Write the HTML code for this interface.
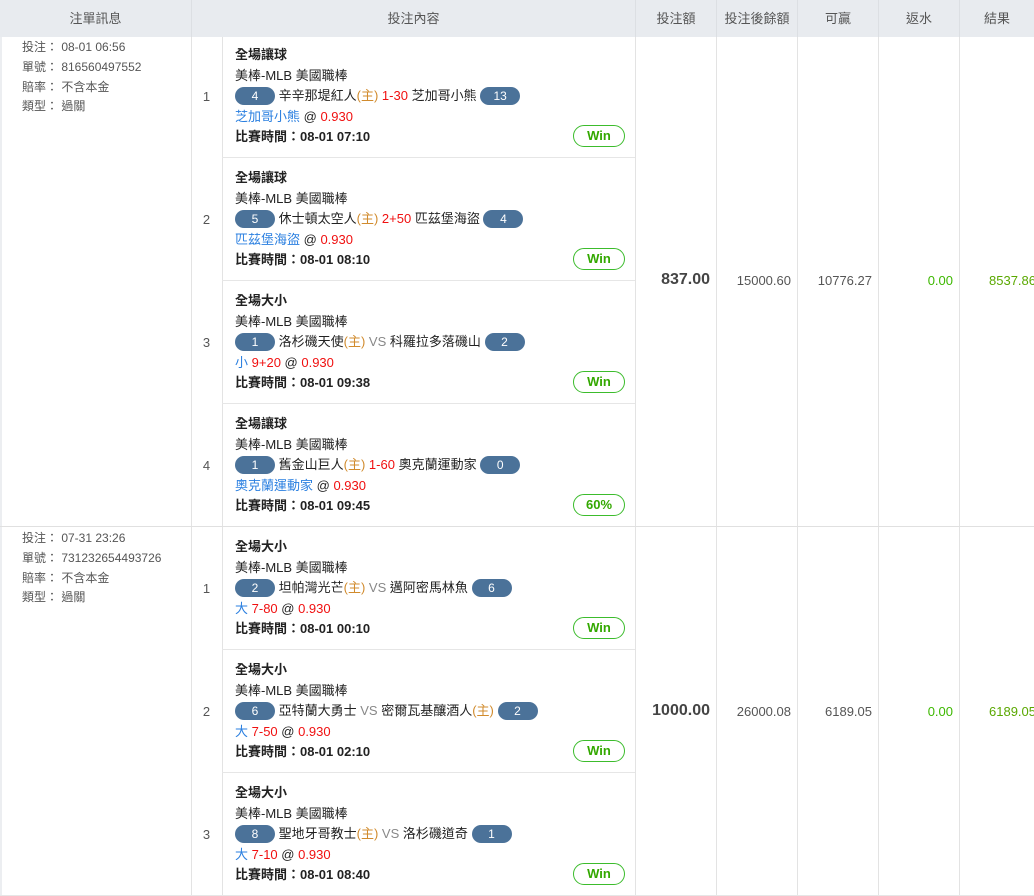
<!DOCTYPE html>
<html><head><meta charset="utf-8"><style>
*{margin:0;padding:0;box-sizing:border-box}
body{width:1034px;height:896px;background:#fff;font-family:"Liberation Sans","Noto Sans CJK TC",sans-serif;font-size:12px;color:#222;position:relative;overflow:hidden}
.a{position:absolute}
.hd{top:0;height:37px;background:#e8ebef;color:#555;font-size:13px;line-height:37px;text-align:center;border-right:1px solid #dcdfe3}
.vl{position:absolute;width:1px;background:#e3e3e3}
.hl{position:absolute;height:1px;background:#e6e6e6}
.info{left:22px;color:#555;font-size:12px;line-height:19.8px}
.no{left:191px;width:31px;text-align:center;color:#555;font-size:13px}
.c{left:235px;font-size:13px;line-height:20.5px;white-space:nowrap}
.c b{font-weight:bold}
.p{display:inline-block;width:40px;height:18px;border-radius:9px;background:#4b7299;color:#fff;text-align:center;line-height:18px;font-size:12px;vertical-align:middle;margin-top:-2px}
.r{color:#f01010}.bl{color:#2a7fe0}.o{color:#d18b2d}.g{color:#888}
.win{left:573px;width:52px;height:22px;border:1.5px solid #3cbc2c;border-radius:11px;color:#33a800;font-weight:bold;font-size:13px;text-align:center;line-height:19px}
.num{text-align:right;font-size:13px;color:#555}
</style></head><body>
<div class="a hd" style="left:0;width:192px">注單訊息</div>
<div class="a hd" style="left:192px;width:444px">投注內容</div>
<div class="a hd" style="left:636px;width:81px">投注額</div>
<div class="a hd" style="left:717px;width:81px">投注後餘額</div>
<div class="a hd" style="left:798px;width:81px">可贏</div>
<div class="a hd" style="left:879px;width:81px">返水</div>
<div class="a hd" style="left:960px;width:74px;border-right:0">結果</div>
<div class="a" style="left:0;top:37px;width:2px;height:859px;background:#eceef1"></div>

<div class="vl" style="left:191px;top:37px;height:859px"></div>
<div class="vl" style="left:222px;top:37px;height:859px"></div>
<div class="vl" style="left:635px;top:37px;height:859px"></div>
<div class="vl" style="left:716px;top:37px;height:859px"></div>
<div class="vl" style="left:797px;top:37px;height:859px"></div>
<div class="vl" style="left:878px;top:37px;height:859px"></div>
<div class="vl" style="left:959px;top:37px;height:859px"></div>
<div class="hl" style="left:222px;width:413px;top:157px"></div>
<div class="hl" style="left:222px;width:413px;top:280px"></div>
<div class="hl" style="left:222px;width:413px;top:403px"></div>
<div class="hl" style="left:0;width:1034px;top:526px;background:#e0e0e0"></div>
<div class="hl" style="left:222px;width:413px;top:649px"></div>
<div class="hl" style="left:222px;width:413px;top:772px"></div>
<div class="hl" style="left:0;width:1034px;top:895px"></div>

<div class="a info" style="top:38px">投注： 08-01 06:56<br>單號： 816560497552<br>賠率： 不含本金<br>類型： 過關</div>
<div class="a info" style="top:529px">投注： 07-31 23:26<br>單號： 731232654493726<br>賠率： 不含本金<br>類型： 過關</div>

<div class="a no" style="top:89px">1</div>
<div class="a c" style="top:45px"><b>全場讓球</b><br>美棒-MLB 美國職棒<br><span class="p">4</span> 辛辛那堤紅人<span class="o">(主)</span> <span class="r">1-30</span> 芝加哥小熊 <span class="p">13</span><br><span class="bl">芝加哥小熊</span> @ <span class="r">0.930</span><br><b>比賽時間：08-01 07:10</b></div>
<div class="a win" style="top:125px">Win</div>

<div class="a no" style="top:212px">2</div>
<div class="a c" style="top:168px"><b>全場讓球</b><br>美棒-MLB 美國職棒<br><span class="p">5</span> 休士頓太空人<span class="o">(主)</span> <span class="r">2+50</span> 匹茲堡海盜 <span class="p">4</span><br><span class="bl">匹茲堡海盜</span> @ <span class="r">0.930</span><br><b>比賽時間：08-01 08:10</b></div>
<div class="a win" style="top:248px">Win</div>

<div class="a no" style="top:335px">3</div>
<div class="a c" style="top:291px"><b>全場大小</b><br>美棒-MLB 美國職棒<br><span class="p">1</span> 洛杉磯天使<span class="o">(主)</span> <span class="g">VS</span> 科羅拉多落磯山 <span class="p">2</span><br><span class="bl">小</span> <span class="r">9+20</span> @ <span class="r">0.930</span><br><b>比賽時間：08-01 09:38</b></div>
<div class="a win" style="top:371px">Win</div>

<div class="a no" style="top:458px">4</div>
<div class="a c" style="top:414px"><b>全場讓球</b><br>美棒-MLB 美國職棒<br><span class="p">1</span> 舊金山巨人<span class="o">(主)</span> <span class="r">1-60</span> 奧克蘭運動家 <span class="p">0</span><br><span class="bl">奧克蘭運動家</span> @ <span class="r">0.930</span><br><b>比賽時間：08-01 09:45</b></div>
<div class="a win" style="top:494px">60%</div>

<div class="a no" style="top:581px">1</div>
<div class="a c" style="top:537px"><b>全場大小</b><br>美棒-MLB 美國職棒<br><span class="p">2</span> 坦帕灣光芒<span class="o">(主)</span> <span class="g">VS</span> 邁阿密馬林魚 <span class="p">6</span><br><span class="bl">大</span> <span class="r">7-80</span> @ <span class="r">0.930</span><br><b>比賽時間：08-01 00:10</b></div>
<div class="a win" style="top:617px">Win</div>

<div class="a no" style="top:704px">2</div>
<div class="a c" style="top:660px"><b>全場大小</b><br>美棒-MLB 美國職棒<br><span class="p">6</span> 亞特蘭大勇士 <span class="g">VS</span> 密爾瓦基釀酒人<span class="o">(主)</span> <span class="p">2</span><br><span class="bl">大</span> <span class="r">7-50</span> @ <span class="r">0.930</span><br><b>比賽時間：08-01 02:10</b></div>
<div class="a win" style="top:740px">Win</div>

<div class="a no" style="top:827px">3</div>
<div class="a c" style="top:783px"><b>全場大小</b><br>美棒-MLB 美國職棒<br><span class="p">8</span> 聖地牙哥教士<span class="o">(主)</span> <span class="g">VS</span> 洛杉磯道奇 <span class="p">1</span><br><span class="bl">大</span> <span class="r">7-10</span> @ <span class="r">0.930</span><br><b>比賽時間：08-01 08:40</b></div>
<div class="a win" style="top:863px">Win</div>

<div class="a num" style="left:636px;width:74px;top:271px;font-size:16px;font-weight:bold;color:#444">837.00</div>
<div class="a num" style="left:717px;width:74px;top:273px">15000.60</div>
<div class="a num" style="left:798px;width:74px;top:273px">10776.27</div>
<div class="a num" style="left:879px;width:74px;top:273px;color:#3db800">0.00</div>
<div class="a num" style="left:960px;width:76px;top:273px;color:#5aa800">8537.86</div>

<div class="a num" style="left:636px;width:74px;top:702px;font-size:16px;font-weight:bold;color:#444">1000.00</div>
<div class="a num" style="left:717px;width:74px;top:704px">26000.08</div>
<div class="a num" style="left:798px;width:74px;top:704px">6189.05</div>
<div class="a num" style="left:879px;width:74px;top:704px;color:#3db800">0.00</div>
<div class="a num" style="left:960px;width:76px;top:704px;color:#5aa800">6189.05</div>
</body></html>
